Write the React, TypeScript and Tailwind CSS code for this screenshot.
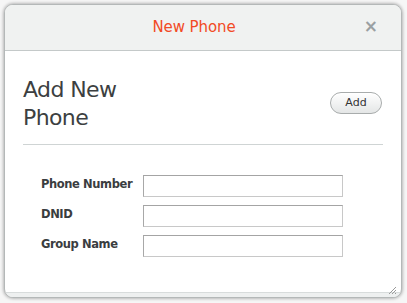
export default function App() {
  const rows = ["Phone Number", "DNID", "Group Name"];
  return (
    <div className="h-[303px] w-[407px] bg-[#f6f6f6] pl-[4px] pt-[4px] font-['DejaVu_Sans',sans-serif]">
      <div className="flex h-[294px] w-[398px] flex-col overflow-hidden rounded-[9px] border border-[#b4b8b8] bg-white shadow-[0_0_3px_1px_rgba(0,0,0,0.25)]">
        <div className="relative flex h-[46px] shrink-0 items-center justify-center border-b border-[#c4c9c9] bg-[#f0f2f1] pr-[18px]">
          <span className="text-[15px] tracking-[-0.1px] text-[#f24a25]">New Phone</span>
          <span className="absolute right-[23px] top-[13px] text-[17px] font-bold leading-none text-[#9aa0a2]">×</span>
        </div>
        <div className="flex flex-1 flex-col px-[18px]">
          <div className="flex items-center justify-between border-b border-[#cfd4d4] pb-[12px] pt-[25px]">
            <h1 className="w-[120px] text-[22px] leading-[28px] tracking-[-0.6px] text-[#3c3f41]">Add New Phone</h1>
            <button className="mb-[2px] mr-[1px] h-[22px] w-[52px] rounded-full border border-[#a8acac] bg-gradient-to-b from-white to-[#e4e6e6] text-[11px] text-[#333] shadow-[inset_0_1px_0_white]">
              Add
            </button>
          </div>
          <div className="mt-[30px] flex flex-col gap-[8px] pl-[18px]">
            {rows.map((r) => (
              <div key={r} className="flex items-start">
                <label className="w-[102px] text-[11.5px] font-bold leading-[18px] tracking-[-0.4px] text-[#3a3d40]">{r}</label>
                <input className="h-[22px] w-[200px] border border-[#c8c8c8] border-l-[#a8a8a8] border-t-[#a4a4a4] bg-white" />
              </div>
            ))}
          </div>
        </div>
        <div className="relative h-[5px] shrink-0 border-t border-[#d8dcdc] bg-[#eef0f0]">
          <svg className="absolute bottom-[2px] right-[4px]" width="10" height="10" viewBox="0 0 10 10">
            <path d="M9 2 L2 9 M9 5 L5 9 M9 8 L8 9" stroke="#9a9a9a" strokeWidth="1" />
          </svg>
        </div>
      </div>
    </div>
  );
}
